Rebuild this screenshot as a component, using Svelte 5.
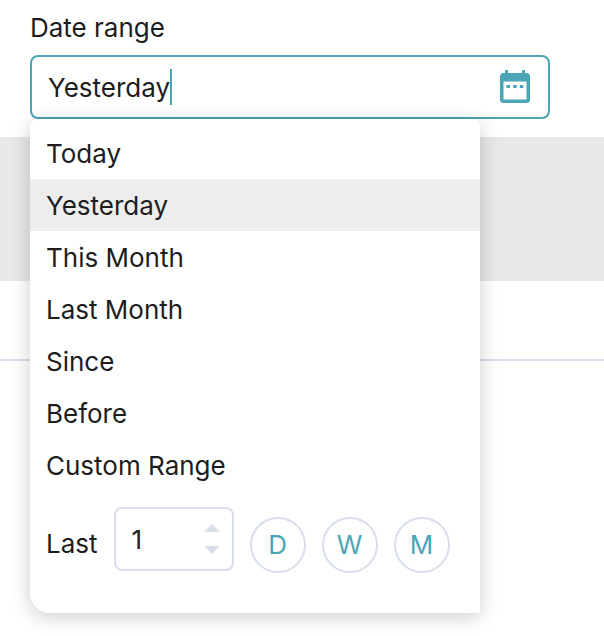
<script>
	const ranges = ["Today", "Yesterday", "This Month", "Last Month", "Since", "Before", "Custom Range"];
	const units = [
		{short: "D", name: "days"},
		{short: "W", name: "weeks"},
		{short: "M", name: "months"}
	];

	let value = $state("Yesterday");
	let amount = $state(1);
	let open = $state(true);

	function pick(range) {
		value = range;
	}

	function pickLast(unit) {
		value = "Last " + amount + " " + unit.name;
	}

	function step(by) {
		amount = Math.max(1, amount + by);
	}
</script>

<div class="page">
	<header>
		<label class="title" for="range">Date range</label>
		<div class="picker">
			<div class="field">
				<input id="range" class="value" type="text" autocomplete="off" bind:value />
				<span class="caret"></span>
				<button class="calendar" aria-label="Toggle date ranges" onclick={() => (open = !open)}>
					<svg width="30" height="34" viewBox="0 0 30 34">
						<path fill="currentColor" fill-rule="evenodd" d="M5 0h3v3h14V0h3v3h1.500a3.500 3.500 0 0 1 3.500 3.500v23a3.500 3.500 0 0 1-3.500 3.500h-23A3.500 3.500 0 0 1 0 29.500v-23A3.500 3.500 0 0 1 3.500 3H5zM3.500 11.500v18h23v-18z" />
						<path fill="currentColor" d="M6.500 15h3.500v3H6.500zM13.200 15h3.500v3h-3.500zM19.800 15h3.500v3h-3.500z" />
					</svg>
				</button>
			</div>
			{#if open}
				<div class="menu">
					<ul>
						{#each ranges as range}
							<li>
								<button class="item" class:selected={range === value} onclick={() => pick(range)}>{range}</button>
							</li>
						{/each}
					</ul>
					<div class="last">
						<label for="amount">Last</label>
						<div class="number">
							<input id="amount" type="number" min="1" bind:value={amount} />
							<div class="steps">
								<button aria-label="More" onclick={() => step(1)}>
									<svg width="16" height="8" viewBox="0 0 16 8"><path fill="currentColor" d="M8 0l8 8H0z" /></svg>
								</button>
								<button aria-label="Less" onclick={() => step(-1)}>
									<svg width="16" height="8" viewBox="0 0 16 8"><path fill="currentColor" d="M0 0h16L8 8z" /></svg>
								</button>
							</div>
						</div>
						<div class="units">
							{#each units as unit}
								<button class="unit" aria-label={unit.name} onclick={() => pickLast(unit)}>{unit.short}</button>
							{/each}
						</div>
					</div>
				</div>
			{/if}
		</div>
	</header>
	<div class="band"></div>
	<div class="rule"></div>
</div>

<style>
	:global(body) {
		background: #fff;
	}
	.page {
		min-height: 100vh;
		color: #1d1d1d;
		font: 26px/36px Inter, "Liberation Sans", sans-serif;
	}
	button, input {
		font: inherit;
		color: inherit;
		margin: 0;
		padding: 0;
		border: 0;
		background: none;
		box-sizing: border-box;
	}
	button {
		cursor: pointer;
	}
	input:focus {
		outline: none;
	}
	svg {
		display: block;
	}

	header {
		padding: 10px 54px 18px 30px;
	}
	.title {
		display: block;
		margin-bottom: 9px;
	}
	.picker {
		position: relative;
	}
	.field {
		display: flex;
		align-items: center;
		height: 64px;
		box-sizing: border-box;
		padding: 0 18px 0 16px;
		border: 2px solid #4aa5b4;
		border-radius: 8px;
	}
	.value {
		field-sizing: content;
		min-width: 0;
		padding-top: 2px;
		caret-color: transparent;
	}
	.caret {
		width: 2px;
		height: 36px;
		background: #4aa5b4;
	}
	.calendar {
		margin-left: auto;
		color: #4aa5b4;
	}

	.menu {
		position: absolute;
		top: 100%;
		left: 0;
		width: 450px;
		box-sizing: border-box;
		padding: 8px 0 40px;
		background: #fff;
		border-radius: 8px 8px 0 20px;
		box-shadow: 0 4px 20px rgba(0, 0, 0, 0.2);
	}
	ul {
		list-style: none;
		margin: 0;
		padding: 0;
	}
	.item {
		display: block;
		width: 100%;
		height: 52px;
		padding: 2px 16px 0;
		text-align: left;
	}
	.item.selected {
		background: #ededed;
	}

	.last {
		display: flex;
		align-items: center;
		gap: 16px;
		padding: 16px 16px 0;
	}
	.last label {
		padding-top: 8px;
	}
	.number {
		display: flex;
		align-items: center;
		align-self: flex-start;
		justify-content: space-between;
		width: 120px;
		height: 64px;
		box-sizing: border-box;
		padding: 0 12px 0 16px;
		border: 2px solid #d9deeb;
		border-radius: 8px;
	}
	.number input {
		width: 60px;
		padding-top: 2px;
		appearance: textfield;
	}
	.number input::-webkit-inner-spin-button {
		appearance: none;
	}
	.steps {
		display: grid;
		gap: 14px;
		color: #d9deeb;
	}
	.units {
		display: flex;
		gap: 16px;
		padding-top: 10px;
	}
	.unit {
		width: 56px;
		height: 56px;
		border: 2px solid #d9deeb;
		border-radius: 50%;
		color: #4aa5b4;
	}

	.band {
		height: 144px;
		background: #e8e8e8;
	}
	.rule {
		margin-top: 78px;
		border-top: 2px solid #d9deeb;
	}
</style>
